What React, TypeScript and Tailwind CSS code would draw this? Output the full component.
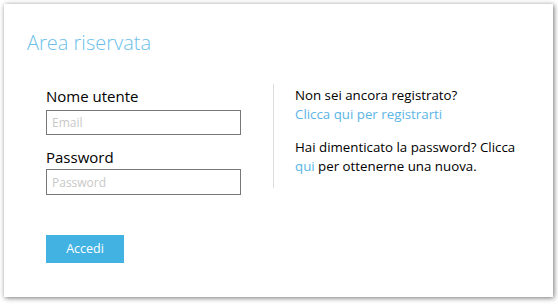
export default function App() {
  return (
    <div className="h-[304px] w-[558px] bg-white pt-[4px] pl-[4px] font-['Open_Sans',sans-serif]">
      <div className="h-[293px] w-[549px] bg-white shadow-[1px_1px_5px_rgba(0,0,0,0.55)]">
        {/* Header */}
        <h1 className="pl-[23px] pt-[25px] text-[20px] font-light leading-[28px] text-[#6cc0ea]">
          Area riservata
        </h1>

        <div className="mt-[28px] flex">
          {/* Login form */}
          <div className="w-[269px] pl-[42px]">
            <label className="block text-[15px] leading-[22px] text-black">Nome utente</label>
            <input
              type="text"
              placeholder="Email"
              className="mt-[3px] block h-[25px] w-[195px] border border-[#777] px-[5px] text-[12px] text-black outline-none placeholder:text-[#c8c8c8]"
            />
            <label className="mt-[11px] block text-[15px] leading-[22px] text-black">Password</label>
            <input
              type="password"
              placeholder="Password"
              className="mt-[1px] block h-[26px] w-[195px] border border-[#777] px-[5px] text-[12px] text-black outline-none placeholder:text-[#c8c8c8]"
            />
            <button className="mt-[40px] h-[28px] w-[78px] bg-[#41b2e2] text-[12.5px] text-white">
              Accedi
            </button>
          </div>

          {/* Divider */}
          <div className="-mt-[1px] h-[104px] w-px bg-[#dcdcdc]" />

          {/* Info */}
          <div className="pl-[21px] pt-[1px] text-[13.3px] leading-[19px] text-black">
            <p>Non sei ancora registrato?</p>
            <a className="block text-[#5bb5e5]">Clicca qui per registrarti</a>
            <p className="mt-[14px]">
              Hai dimenticato la password? Clicca
              <br />
              <a className="text-[#5bb5e5]">qui</a> per ottenerne una nuova.
            </p>
          </div>
        </div>
      </div>
    </div>
  );
}
